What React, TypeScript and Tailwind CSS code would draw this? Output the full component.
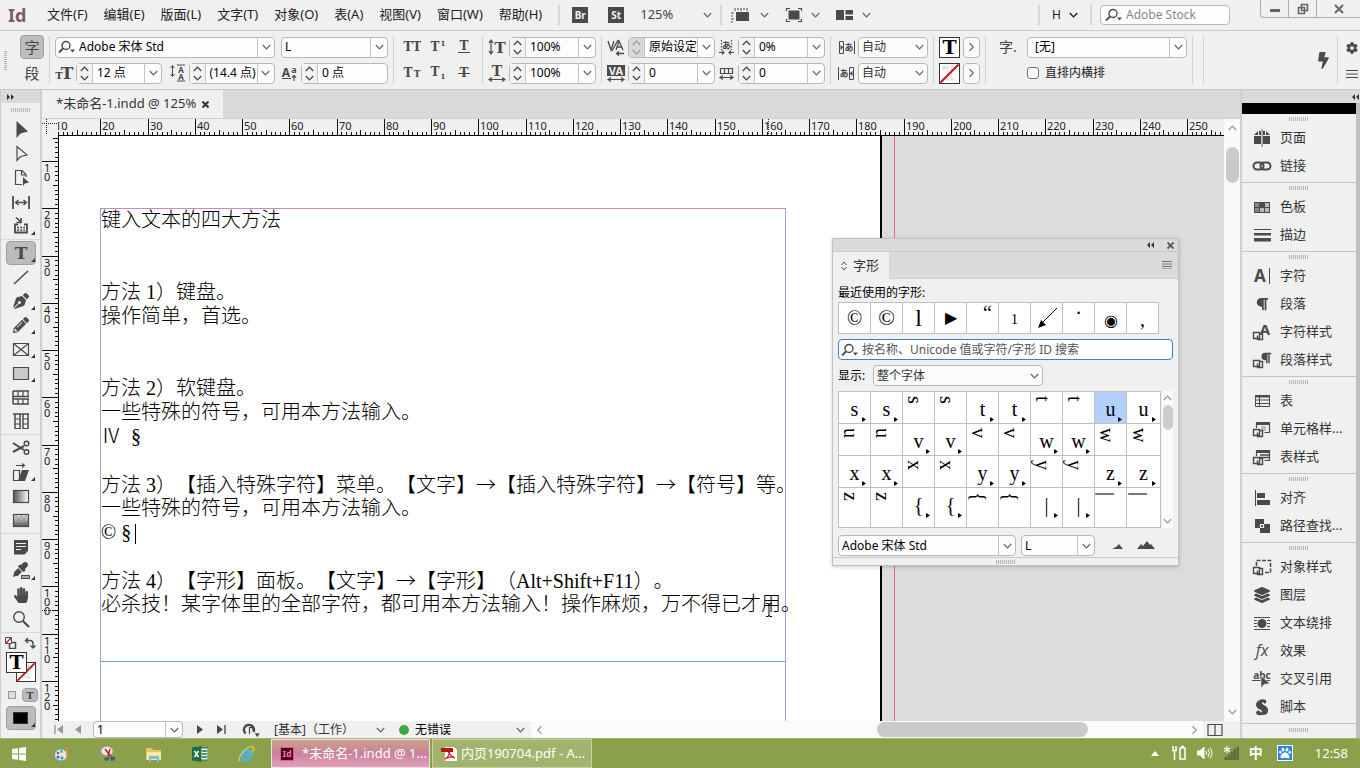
import type { ReactNode } from 'react'
import { FaBolt, FaCog, FaEyeDropper, FaHandPaper, FaLayerGroup, FaParagraph, FaPaw, FaPencilAlt, FaPenNib } from 'react-icons/fa'

const INK = '#4a4a4a'
// 10 mm on the rulers at 125%
const STEP = 47.24

function Svg({ w = 20, h = 20, children }: { w?: number; h?: number; children: ReactNode }) {
  return (
    <svg width={w} height={h} viewBox={`0 0 ${w} ${h}`} fill="none" stroke={INK} strokeWidth="1.4" className="shrink-0" aria-hidden="true">
      {children}
    </svg>
  )
}

function Letter({ x, y, size, children, fill = INK, serif = true }: { x: number; y: number; size: number; children: string; fill?: string; serif?: boolean }) {
  return (
    <text x={x} y={y} fontSize={size} fill={fill} stroke="none" fontWeight="bold" textAnchor="middle" fontFamily={serif ? 'DejaVu Serif, serif' : 'Noto Sans, sans-serif'}>
      {children}
    </text>
  )
}

function Chevron({ up = false, color = '#666' }: { up?: boolean; color?: string }) {
  return (
    <svg width="9" height="6" viewBox="0 0 9 6" fill="none" stroke={color} strokeWidth="1.2" aria-hidden="true">
      <path d={up ? 'M.8 5 4.5 1.2 8.2 5' : 'M.8 1 4.5 4.8 8.2 1'} />
    </svg>
  )
}

function Grip() {
  return (
    <svg width="20" height="4" aria-hidden="true">
      {Array.from({ length: 10 }, (_, i) => (
        <rect key={i} x={i * 2} width="1" height="4" fill="#b4b4b4" />
      ))}
    </svg>
  )
}

function SearchGlyph() {
  return (
    <Svg w={18} h={14}>
      <circle cx="8" cy="5.5" r="4" />
      <path d="M5 8.5 1 12.5" strokeWidth="1.8" />
      <path d="M12 9.5h5l-2.5 3z" fill={INK} stroke="none" />
    </Svg>
  )
}

function Combo({ label, value, className, search = false }: { label: string; value: string; className: string; search?: boolean }) {
  return (
    <div className={`flex shrink-0 items-stretch rounded-sm border border-[#b8b8b8] bg-[#fdfdfd] ${className}`}>
      {search && (
        <span className="flex items-center pl-0.5">
          <SearchGlyph />
        </span>
      )}
      <input aria-label={label} defaultValue={value} className="w-0 min-w-0 flex-1 bg-transparent px-[3px] text-black outline-none" />
      <button aria-label={`${label}列表`} className="flex w-[17px] items-center justify-center border-l border-[#c4c4c4]">
        <Chevron />
      </button>
    </div>
  )
}

function Spin({ label, value, className, drop = true, off = false }: { label: string; value: string; className: string; drop?: boolean; off?: boolean }) {
  return (
    <div className={`flex h-[21px] shrink-0 items-stretch rounded-sm border border-[#b8b8b8] bg-[#fdfdfd] ${className}`}>
      <div className={`flex w-4 flex-col items-center justify-between border-r border-[#c4c4c4] py-0.5 ${off ? 'bg-[#d8d8d8]' : 'bg-[#f3f3f3]'}`}>
        <button aria-label={`${label}增加`}><span className="block"><Chevron up color={off ? '#999' : '#444'} /></span></button>
        <button aria-label={`${label}减少`}><span className="block"><Chevron color={off ? '#999' : '#444'} /></span></button>
      </div>
      <input aria-label={label} defaultValue={value} className="w-0 min-w-0 flex-1 bg-transparent pl-1 text-black outline-none" />
      {drop && (
        <button aria-label={`${label}列表`} className="flex w-[17px] items-center justify-center border-l border-[#c4c4c4]">
          <Chevron />
        </button>
      )}
    </div>
  )
}

function Select({ label, value, className }: { label: string; value: string; className: string }) {
  return (
    <div className={`relative shrink-0 ${className}`}>
      <select aria-label={label} className="h-[21px] w-full appearance-none rounded-sm border border-[#b8b8b8] bg-[#fbfbfb] px-[3px] text-[#333] outline-none">
        <option>{value}</option>
      </select>
      <span className="pointer-events-none absolute inset-y-0 right-1 flex items-center">
        <Chevron />
      </span>
    </div>
  )
}

function Sep() {
  return <div className="mx-[5px] h-12 w-px shrink-0 bg-[#d2d2d2]" />
}

const menus = ['文件(F)', '编辑(E)', '版面(L)', '文字(T)', '对象(O)', '表(A)', '视图(V)', '窗口(W)', '帮助(H)']

function MenuBar() {
  return (
    <header className="flex h-[30px] shrink-0 items-center">
      <div className="w-[39px] pl-2 text-lg leading-none font-bold text-[#7a5a6c]">Id</div>
      <nav className="flex">
        {menus.map((m) => (
          <button key={m} className="px-2 text-[13px] whitespace-nowrap">{m}</button>
        ))}
      </nav>
      <div className="mx-2 h-5 w-0.5 bg-[#d6d6d6]" />
      <button className="ml-1 h-4 w-4 bg-[#4a4a4a] text-[10px] leading-4 font-bold text-[#f0f0f0]">Br</button>
      <button className="ml-5 h-4 w-4 bg-[#4a4a4a] text-[10px] leading-4 font-bold text-[#f0f0f0]">St</button>
      <button className="ml-4 flex w-[72px] items-center justify-between text-[13px] text-[#444]">
        125% <Chevron />
      </button>
      <div className="mx-2 h-5 w-0.5 bg-[#d6d6d6]" />
      <button aria-label="视图选项" className="flex items-center gap-2">
        <Svg w={22} h={16}>
          <path d="M5 1v3M8 1v2M11 1v3M14 1v2M17 1v3M1 6h3M1 9h2M1 12h3M1 15h2" strokeWidth="1" />
          <path d="M6 5h13v9H6z" fill={INK} stroke="none" />
        </Svg>
        <Chevron />
      </button>
      <button aria-label="屏幕模式" className="ml-4 flex items-center gap-2">
        <Svg w={18} h={16}>
          <path d="M1.500 4V1.500H5M13 1.500h3.500V4M16.500 12v2.500H13M5 14.500H1.500V12" strokeWidth="1.200" />
          <path d="M3.500 3.500h11v9h-11z" fill={INK} stroke="none" />
        </Svg>
        <Chevron />
      </button>
      <button aria-label="排列文档" className="ml-4 flex items-center gap-2">
        <Svg w={18} h={12}>
          <path d="M0 1h8v10H0zM9.500 1H17v4.500H9.500zM9.500 7H17v4H9.500z" fill={INK} stroke="none" />
        </Svg>
        <Chevron />
      </button>
      <div className="flex-1" />
      <div className="h-5 w-0.5 bg-[#d6d6d6]" />
      <button className="flex items-center gap-2 px-3">
        H <Chevron color="#111" />
      </button>
      <div className="h-5 w-0.5 bg-[#d6d6d6]" />
      <label className="ml-2 flex h-5 w-[130px] items-center rounded-sm border border-[#b8b8b8] bg-[#fdfdfd] pl-1">
        <SearchGlyph />
        <input aria-label="搜索 Adobe Stock" placeholder="Adobe Stock" className="w-0 min-w-0 flex-1 pl-[3px] outline-none placeholder:text-[#888]" />
      </label>
      <div className="ml-[30px] flex h-[18px] w-[100px] self-start rounded-bl border-b border-l border-[#aaa]">
        <button aria-label="最小化" className="flex w-7 items-center justify-center border-r border-[#aaa]">
          <span className="mt-1 h-[3px] w-2.5 bg-[#666]" />
        </button>
        <button aria-label="还原" className="flex w-7 items-center justify-center border-r border-[#aaa]">
          <Svg w={12} h={12}>
            <path d="M4.500 1.500h6v6h-6zM1.500 4.500h6v6h-6z" stroke="#666" strokeWidth="1.600" />
          </Svg>
        </button>
        <button aria-label="关闭" className="flex flex-1 items-center justify-center">
          <Svg w={10} h={10}>
            <path d="M1 1l8 8M9 1 1 9" stroke="#666" strokeWidth="2" />
          </Svg>
        </button>
      </div>
    </header>
  )
}

const caseIcons: [string, ReactNode][] = [
  ['全部大写', <><Letter x={5} y={13} size={12}>T</Letter><Letter x={14} y={13} size={12}>T</Letter></>],
  ['上标', <><Letter x={6} y={13} size={12}>T</Letter><Letter x={14} y={8} size={7}>1</Letter></>],
  ['下划线', <><Letter x={9} y={12} size={12}>T</Letter><path d="M3 14.500h12" strokeWidth="1" /></>],
  ['小型大写', <><Letter x={5} y={13} size={12}>T</Letter><Letter x={14} y={13} size={9}>T</Letter></>],
  ['下标', <><Letter x={6} y={12} size={12}>T</Letter><Letter x={14} y={15} size={7}>1</Letter></>],
  ['删除线', <><Letter x={9} y={13} size={12}>T</Letter><path d="M3 9.500h12" strokeWidth="1" /></>],
]

function ControlPanel() {
  return (
    <section className="flex h-[60px] shrink-0 items-center border-y border-[#cacaca]">
      <div className="flex w-[15px] flex-col items-end gap-px pr-2">
        {Array.from({ length: 10 }, (_, i) => <span key={i} className="h-px w-[3px] bg-[#b4b4b4]" />)}
      </div>
      <div className="ml-[5px] flex flex-col gap-0.5 text-[15px] text-[#444]">
        <button className="h-6 w-6 rounded-sm border border-[#a0a0a0] bg-[#bcbcbc] leading-5">字</button>
        <button className="h-6 w-6 leading-6">段</button>
      </div>
      <Sep />
      <div className="flex flex-col gap-[5px]">
        <div className="flex gap-1.5">
          <Combo label="字体" value="Adobe 宋体 Std" search className="h-[21px] w-[220px]" />
          <Combo label="字体样式" value="L" className="h-[21px] w-[107px]" />
        </div>
        <div className="flex items-center justify-between">
          <div className="flex items-center gap-0.5">
            <Svg w={19} h={18}><Letter x={4} y={15} size={10}>T</Letter><Letter x={12} y={15} size={17}>T</Letter></Svg>
            <Spin label="字体大小" value="12 点" className="w-[86px]" />
          </div>
          <div className="flex items-center gap-[3px]">
            <Svg w={17} h={18}>
              <path d="M3.500 2v10M1.500 4l2-2.500 2 2.500M1.500 10l2 2.500 2-2.500M8 1h8M8 17h8" strokeWidth="1" />
              <Letter x={12} y={9} size={8} serif={false}>A</Letter><Letter x={12} y={16} size={8} serif={false}>A</Letter>
            </Svg>
            <Spin label="行距" value="(14.4 点)" className="w-[86px]" />
          </div>
          <div className="flex items-center gap-[3px]">
            <Svg w={17} h={18}>
              <Letter x={5} y={13} size={12} serif={false}>A</Letter><Letter x={13} y={9} size={9} serif={false}>a</Letter>
              <path d="M1 14.500h9M13 17v-5M11 13.500l2-2 2 2" strokeWidth="1.200" />
            </Svg>
            <Spin label="基线偏移" value="0 点" drop={false} className="w-[87px]" />
          </div>
        </div>
      </div>
      <Sep />
      <div className="mx-1 grid grid-cols-3 gap-2">
        {caseIcons.map(([name, art]) => (
          <button key={name} aria-label={name}><Svg w={18} h={18}>{art}</Svg></button>
        ))}
      </div>
      <Sep />
      <div className="flex flex-col gap-[5px]">
        <div className="flex items-center gap-[3px]">
          <Svg w={18} h={18}><Letter x={12} y={15} size={15}>T</Letter><path d="M3 3v12M1 5l2-3 2 3M1 13l2 3 2-3" strokeWidth="1.200" /></Svg>
          <Spin label="垂直缩放" value="100%" className="w-[87px]" />
        </div>
        <div className="flex items-center gap-[3px]">
          <Svg w={18} h={18}><Letter x={9} y={12} size={14}>T</Letter><path d="M2 15.500h14M4 13.500l-3 2 3 2M14 13.500l3 2-3 2" strokeWidth="1.200" /></Svg>
          <Spin label="水平缩放" value="100%" className="w-[87px]" />
        </div>
      </div>
      <Sep />
      <div className="flex flex-col gap-[5px]">
        <div className="flex items-center gap-[3px]">
          <Svg w={18} h={18}>
            <path d="M1 3l3 9 3-9M5 13 11 2M9 12l3-9 4 9M10 9h5M17 15.500h-7M12 13.500l-2.500 2 2.500 2" strokeWidth="1.300" />
          </Svg>
          <Spin label="字偶间距" value="原始设定" off className="w-[87px]" />
          <Svg w={17} h={18}>
            <path d="M3.500 2v10M13.500 2v10" strokeWidth="1.200" strokeDasharray="1.500 1.500" />
            <text x="8.500" y="11" fontSize="9" fill={INK} stroke="none" fontWeight="bold" textAnchor="middle" fontFamily="Noto Sans CJK JP">あ</text>
            <path d="M1 14.500h5M4 12.500l2 2-2 2M16 14.500h-5M13 12.500l-2 2 2 2" strokeWidth="1.100" />
          </Svg>
          <Spin label="比例间距" value="0%" className="w-[87px]" />
        </div>
        <div className="flex items-center gap-[3px]">
          <Svg w={18} h={18}>
            <path d="M0 1h18v11H0z" fill={INK} stroke="none" />
            <Letter x={9} y={11} size={11} fill="#f0f0f0" serif={false}>VA</Letter>
            <path d="M1 15.500h16M4 13.500l-3 2 3 2M14 13.500l3 2-3 2" strokeWidth="1.200" />
          </Svg>
          <Spin label="字符间距" value="0" className="w-[87px]" />
          <Svg w={17} h={18}>
            <path d="M2.500 4.500h12v5h-12zM6.500 4.500v5M10.500 4.500v5M2 13.500h13M5 11.500l-3 2 3 2M12 11.500l3 2-3 2" strokeWidth="1.200" />
          </Svg>
          <Spin label="网格指定格数" value="0" className="w-[87px]" />
        </div>
      </div>
      <Sep />
      <div className="ml-0.5 flex flex-col gap-[5px]">
        <div className="flex items-center gap-[3px]">
          <Svg w={17} h={18}>
            <path d="M1.500 3.500h4v12h-4zM16.500 3v13" strokeWidth="1" /><path d="M2.500 7v5l3-2.500z" fill={INK} stroke="none" />
            <text x="11" y="13" fontSize="9" fill={INK} stroke="none" fontWeight="bold" textAnchor="middle" fontFamily="Noto Sans CJK JP">あ</text>
          </Svg>
          <Select label="字符前挤压间距" value="自动" className="w-[70px]" />
        </div>
        <div className="flex items-center gap-[3px]">
          <Svg w={17} h={18}>
            <path d="M11.500 3.500h4v12h-4zM.5 3v13" strokeWidth="1" /><path d="M14.500 7v5l-3-2.500z" fill={INK} stroke="none" />
            <text x="6" y="13" fontSize="9" fill={INK} stroke="none" fontWeight="bold" textAnchor="middle" fontFamily="Noto Sans CJK JP">あ</text>
          </Svg>
          <Select label="字符后挤压间距" value="自动" className="w-[70px]" />
        </div>
      </div>
      <Sep />
      <div className="flex flex-col gap-[5px]">
        <div className="flex gap-[3px]">
          <button aria-label="填色"><FillSwatch size={21} /></button>
          <button aria-label="填色选项" className="flex h-[21px] w-[17px] items-center justify-center rounded-sm border border-[#b8b8b8] bg-[#fbfbfb]"><span className="-rotate-90"><Chevron /></span></button>
        </div>
        <div className="flex gap-[3px]">
          <button aria-label="描边"><StrokeSwatch size={21} /></button>
          <button aria-label="描边选项" className="flex h-[21px] w-[17px] items-center justify-center rounded-sm border border-[#b8b8b8] bg-[#fbfbfb]"><span className="-rotate-90"><Chevron /></span></button>
        </div>
      </div>
      <Sep />
      <div className="ml-2 flex flex-col gap-[5px]">
        <div className="flex items-center gap-3">
          <span className="w-4 text-sm leading-5 text-[#444]">字.</span>
          <Combo label="字符样式" value="[无]" className="h-[21px] w-[160px] pl-1" />
        </div>
        <label className="ml-7 flex h-[21px] items-center gap-1.5">
          <input type="checkbox" className="h-3 w-3 appearance-none rounded-[3px] border border-[#777] bg-[#f8f8f8]" />
          直排内横排
        </label>
      </div>
      <Sep />
      <Sep />
      <div className="flex-1" />
      <button aria-label="快速应用"><FaBolt size={17} color={INK} /></button>
      <Sep />
      <div className="flex flex-col items-center gap-4 pr-[2px] pl-[3px]">
        <button aria-label="设置"><FaCog size={12} color={INK} /></button>
        <button aria-label="面板菜单"><Svg w={12} h={8}><path d="M0 .5h12M0 4h12M0 7.500h12" strokeWidth="1" /></Svg></button>
      </div>
    </section>
  )
}

function FillSwatch({ size }: { size: number }) {
  return (
    <svg width={size} height={size} viewBox="0 0 21 21" aria-hidden="true">
      <rect x=".5" y=".5" width="20" height="20" fill="#fff" stroke="#333" />
      <Letter x={10.500} y={17} size={19} fill="#000">T</Letter>
    </svg>
  )
}

function StrokeSwatch({ size }: { size: number }) {
  return (
    <svg width={size} height={size} viewBox="0 0 21 21" aria-hidden="true">
      <rect x=".5" y=".5" width="20" height="20" fill="#fff" stroke="#333" />
      <text x="10.500" y="17" fontSize="18" fill="#fff" stroke="#ccc" strokeWidth=".7" fontWeight="bold" textAnchor="middle" fontFamily="DejaVu Serif, serif">T</text>
      <path d="M1.500 19.500l18-18" stroke="#c8141c" strokeWidth="2" />
    </svg>
  )
}

type Tool = { name: string; art: ReactNode; more?: boolean; active?: boolean }

const toolGroups: Tool[][] = [
  [
    { name: '选择工具', art: <path d="M5.500 1v17l4-4.500 7.500-2z" fill={INK} stroke="none" /> },
    { name: '直接选择工具', art: <path d="M6 2.500v14l3.500-4 6.500-1.500z" strokeWidth="1.200" /> },
    { name: '页面工具', art: <><path d="M11 16.500H4.500v-14H11l4 4V9M10.500 3v4H15" strokeWidth="1.200" /><path d="M12 9v9l2-2.500 4-1z" fill={INK} stroke="none" /></> },
    { name: '间隙工具', art: <><path d="M2 4v13M18 4v13" strokeWidth="1.800" /><path d="M4.500 10.500h11M7.500 8l-3 2.500 3 2.500M12.500 8l3 2.500-3 2.500" strokeWidth="1.300" /></> },
    { name: '内容收集器工具', more: true, art: <><path d="M5 1.500l5 4.500M10 2v4.500H5.500" strokeWidth="1.600" /><path d="M7 8.500H4v8h12v-8h-3" strokeWidth="1.800" /><path d="M6 11.500h8M6 14h8" strokeWidth="1.500" strokeDasharray="2 1.200" /></> },
  ],
  [
    { name: '文字工具', active: true, more: true, art: <Letter x={10} y={16} size={17}>T</Letter> },
    { name: '直线工具', art: <path d="M3 17 17 4" strokeWidth="1.500" /> },
    { name: '钢笔工具', more: true, art: <FaPenNib x="2" y="2" size={16} color={INK} strokeWidth="0" /> },
    { name: '铅笔工具', more: true, art: <FaPencilAlt x="2" y="2" size={16} color={INK} strokeWidth="0" /> },
    { name: '矩形框架工具', more: true, art: <path d="M2.500 4.500h15v12h-15zl15 12M17.500 4.500l-15 12" strokeWidth="1.200" /> },
    { name: '矩形工具', more: true, art: <path d="M2.500 4.500h15v12h-15z" fill="#c9c9c9" strokeWidth="1.200" /> },
    { name: '水平网格工具', art: <><path d="M2 4h16M2 9.500h16M2 12h16M2 17h16M2 4v13" strokeWidth="1.500" /><path d="M7 4v5M12 4v5M17 4v5M7 12v5M12 12v5M17 12v5" strokeWidth="1.200" /></> },
    { name: '垂直网格工具', art: <><path d="M2 3h16M4 3v15M9 3v15M12 3v15M17 3v15" strokeWidth="1.500" /><path d="M4 8h5M4 13h5M4 17.500h5M12 8h5M12 13h5M12 17.500h5" strokeWidth="1.200" /></> },
  ],
  [
    { name: '剪刀工具', art: <><path d="M2 5l11 7M2 14l11-6" strokeWidth="2" /><circle cx="15.500" cy="5.500" r="2.300" /><circle cx="15.500" cy="14" r="2.300" /></> },
    { name: '自由变换工具', more: true, art: <><path d="M2.500 8.500h6v10h-6z" strokeWidth="1.200" /><path d="M11 8h7l-4 11H7z" fill={INK} stroke="none" /><path d="M5 3.500h8M11 1.500l2.500 2-2.500 2" strokeWidth="1.200" /></> },
    { name: '渐变色板工具', art: <rect x="2.500" y="4.500" width="15" height="12" fill="url(#grad-x)" strokeWidth="1.200" /> },
    { name: '渐变羽化工具', art: <><rect x="2.500" y="4.500" width="15" height="12" fill="url(#grad-y)" strokeWidth="1.200" /><path d="M4 6.500h12" stroke="#aaa" strokeWidth="2.500" strokeDasharray="2.500 2.500" /><path d="M6.500 9h10" stroke="#999" strokeWidth="2.500" strokeDasharray="2.500 2.500" /></> },
  ],
  [
    { name: '附注工具', art: <><path d="M3 3h14v11l-3.500 3.500H3z" fill={INK} stroke="none" /><path d="M5 6.500h10M5 9.500h10M5 12.500h5" stroke="#eee" strokeWidth="1.200" /></> },
    { name: '吸管工具', more: true, art: <><FaEyeDropper x="2" y="1" size={15} color={INK} strokeWidth="0" /><path d="M10.500 14.500h8v3h-8z" fill="#aaa" strokeWidth="1" /></> },
    { name: '抓手工具', art: <FaHandPaper x="2" y="2" size={16} color={INK} strokeWidth="0" /> },
    { name: '缩放显示工具', art: <><circle cx="8" cy="8" r="5.300" /><path d="M12 12l6 6" strokeWidth="2.200" /></> },
  ],
]

function Toolbar() {
  return (
    <aside className="flex w-[42px] shrink-0 flex-col items-center overflow-hidden border-x border-[#cfcfcf] border-r-2">
      <div className="flex h-[13px] w-full shrink-0 items-center bg-[#dadada] pl-1.5">
        <svg width="8" height="6" aria-hidden="true"><path d="M0 0l3 3-3 3zM4 0l3 3-3 3z" fill="#333" /></svg>
      </div>
      <div className="flex h-[14px] shrink-0 items-center"><Grip /></div>
      {toolGroups.map((group, i) => (
        <div key={i} className={`flex w-full shrink-0 flex-col items-center py-px ${i ? 'border-t border-[#d9d9d9]' : ''}`}>
          {group.map((t) => (
            <button
              key={t.name}
              aria-label={t.name}
              className={`relative flex h-6 w-[30px] items-center justify-center rounded-sm border ${t.active ? 'border-[#a0a0a0] bg-[#bcbcbc]' : 'border-transparent'}`}
            >
              <Svg>{t.art}</Svg>
              {t.more && (
                <svg width="4" height="4" className="absolute right-0 bottom-0.5" aria-hidden="true"><path d="M4 0v4H0z" fill="#333" /></svg>
              )}
            </button>
          ))}
        </div>
      ))}
      <div className="flex w-full shrink-0 flex-col items-center border-t border-[#d9d9d9] pt-1">
        <div className="flex w-full items-center justify-between px-1">
          <button aria-label="默认填色和描边">
            <Svg w={12} h={12}><path d="M4.500 5.500h6v6h-6z" strokeWidth="1.500" /><path d="M.5.500h6v6h-6z" fill="#fff" strokeWidth="1" /><path d="M1 6l5-5" stroke="#c8141c" /></Svg>
          </button>
          <button aria-label="互换填色和描边">
            <Svg w={12} h={12}><path d="M2 3.500h4q3 0 3 3v4M4 1 1.500 3.500 4 6M6.500 8.500 9 11l2.500-2.500" /></Svg>
          </button>
        </div>
        <div className="mt-[3px] grid w-[30px] grid-cols-[20px_10px] grid-rows-[20px_10px]">
          <span className="z-10 col-start-1 row-start-1"><FillSwatch size={21} /></span>
          <span className="col-span-2 col-start-1 row-span-2 row-start-1 place-self-end"><StrokeSwatch size={20} /></span>
        </div>
        <div className="mt-1.5 flex items-center gap-1.5 pl-1">
          <button aria-label="格式针对容器" className="h-2 w-2 border border-[#999] bg-[#ddd]" />
          <button aria-label="格式针对文本" className="flex h-3.5 w-4 items-center justify-center rounded-sm border border-[#a0a0a0] bg-[#bcbcbc]">
            <Svg w={12} h={12}><Letter x={6} y={10} size={10}>T</Letter></Svg>
          </button>
        </div>
        <button aria-label="应用颜色" className="relative mt-1 flex h-6 w-[30px] items-center justify-center rounded-sm border border-[#a0a0a0] bg-[#bcbcbc]">
          <span className="h-3 w-[15px] border border-[#333] bg-black" />
          <svg width="4" height="4" className="absolute right-0 bottom-0.5" aria-hidden="true"><path d="M4 0v4H0z" fill="#333" /></svg>
        </button>
      </div>
      <svg width="0" height="0" aria-hidden="true">
        <defs>
          <linearGradient id="grad-x"><stop stopColor="#555" /><stop offset="1" stopColor="#fff" /></linearGradient>
          <linearGradient id="grad-y" x2="0" y2="1"><stop stopColor="#eee" /><stop offset="1" stopColor="#555" /></linearGradient>
        </defs>
      </svg>
    </aside>
  )
}

// Offsets are the zero points of each ruler relative to its own start
function HorizontalRuler() {
  const zero = 6
  return (
    <svg width="100%" height="17" className="block shrink-0 bg-[#f0f0f0]" aria-label="水平标尺">
      {Array.from({ length: 251 }, (_, i) => i + 10).map((mm) => {
        const x = Math.round(zero - 42 + (mm * STEP) / 10)
        const top = mm % 10 === 0 ? 0 : mm % 5 === 0 ? 11 : 13
        return x > 15 && <path key={mm} d={`M${x + 0.5} ${top}v17`} stroke="#111" />
      })}
      {Array.from({ length: 25 }, (_, i) => (i + 1) * 10).map((mm) => (
        <text key={mm} x={Math.round(zero - 42 + (mm * STEP) / 10) + 2} y="11" fontSize="11" fill="#222">{mm}</text>
      ))}
      <path d="M0 0h16v17H0z" fill="#f0f0f0" />
      <path d="M0 4.500h16M4.500 0v16M726.500 0v16" stroke="#222" strokeDasharray="1 1" />
      <path d="M16 16.500h2000" stroke="#000" />
    </svg>
  )
}

function VerticalRuler() {
  const zero = -22
  return (
    <svg width="17" height="100%" className="block shrink-0 bg-[#f0f0f0]" aria-label="垂直标尺">
      {Array.from({ length: 130 }, (_, i) => i).map((mm) => {
        const y = Math.round(zero + (mm * STEP) / 10)
        const left = mm % 10 === 0 ? 0 : mm % 5 === 0 ? 11 : 13
        return <path key={mm} d={`M${left} ${y + 0.5}h17`} stroke="#111" />
      })}
      {Array.from({ length: 12 }, (_, i) => (i + 1) * 10).map((mm) => (
        <text key={mm} fontSize="11" fill="#222">
          {String(mm).split('').map((d, i) => (
            <tspan key={i} x="2" y={Math.round(zero + (mm * STEP) / 10) + 11 + i * 9}>{d}</tspan>
          ))}
        </text>
      ))}
      <path d="M0 474.500h16" stroke="#222" strokeDasharray="1 1" />
      <path d="M16.500 0v1200" stroke="#000" />
    </svg>
  )
}

const lines = [
  '键入文本的四大方法', '', '',
  '方法 1）键盘。',
  '操作简单，首选。', '', '',
  '方法 2）软键盘。',
  '一些特殊的符号，可用本方法输入。',
  'Ⅳ  §', '',
  '方法 3）【插入特殊字符】菜单。【文字】→【插入特殊字符】→【符号】等。',
  '一些特殊的符号，可用本方法输入。',
  '© §|', '',
  '方法 4）【字形】面板。【文字】→【字形】（Alt+Shift+F11）。',
  '必杀技！某字体里的全部字符，都可用本方法输入！操作麻烦，万不得已才用。',
]

function Line({ text }: { text: string }) {
  return (
    <p className="h-6 whitespace-pre">
      {text.replace('|', '').split('→').map((part, i) => (
        <span key={i}>
          {i > 0 && <span className="font-['Noto_Sans_CJK_SC',sans-serif]">→</span>}
          {part}
        </span>
      ))}
      {text.endsWith('|') && <span className="ml-1 inline-block h-5 w-px bg-black align-middle" />}
    </p>
  )
}

function Page() {
  return (
    <div className="h-full w-[823px] shrink-0 border-r-2 border-black bg-white pt-[72px] pl-[41px]">
      <div className="h-full w-[686px] border-x border-t border-x-[#a9a0dc] border-t-[#c78bc8]">
        <div className="h-[453px] border-b border-[#6f9fd0] font-['Liberation_Serif','Noto_Sans_CJK_SC',serif] text-xl leading-[22px] font-light text-black">
          {lines.map((line, i) => (
            <Line key={i} text={line} />
          ))}
        </div>
      </div>
    </div>
  )
}

// [glyph, upright]; every entry fills two cells
const pairs: [string, boolean][][] = [
  [['s', true], ['s', false], ['t', true], ['t', false], ['u', true]],
  [['u', false], ['v', true], ['v', false], ['w', true], ['w', false]],
  [['x', true], ['x', false], ['y', true], ['y', false], ['z', true]],
  [['z', false], ['{', true], ['{', false], ['|', true], ['|', false]],
]

const rows = pairs.map((row) => row.flatMap((p) => [p, p]))

const recent: [string, string][] = [
  ['©', 'items-center text-xl'],
  ['©', 'items-center text-[22px]'],
  ['l', 'items-center text-2xl'],
  ['▶', 'items-center text-base'],
  ['“', 'items-start justify-end pr-1.5 text-xl'],
  ['1', 'items-end pb-1.5 text-sm'],
  ['↙', ''],
  ['·', 'items-start text-xl'],
  ['◉', 'items-end pb-1 text-base'],
  [',', 'items-end pb-1 text-xl'],
]

function GlyphPanel() {
  return (
    <section className="absolute top-[102px] right-[45px] w-[347px] border border-[#c2c2c2] bg-[#f0f0f0] text-black shadow-[0_1px_4px_rgba(0,0,0,0.2)]">
      <div className="flex h-[13px] items-center justify-end gap-3 border-b border-[#c8c8c8] bg-[#dbdbdb] pr-1">
        <button aria-label="折叠面板"><svg width="8" height="6" className="block" aria-hidden="true"><path d="M3 0 0 3l3 3zM7 0 4 3l3 3z" fill="#333" /></svg></button>
        <button aria-label="关闭面板"><svg width="7" height="7" className="block" aria-hidden="true"><path d="M.5.500l6 6m0-6-6 6" stroke="#555" strokeWidth="1.800" /></svg></button>
      </div>
      <div className="flex h-[27px] items-stretch border-b border-[#cfcfcf] bg-[#dbdbdb]">
        <button className="-mb-px flex w-14 items-center gap-1.5 bg-[#f0f0f0] pl-2 text-[13px] text-[#333]">
          <svg width="6" height="10" fill="none" stroke="#555" aria-hidden="true"><path d="M.5 4 3 1l2.500 3M.5 6 3 9l2.500-3" /></svg>
          字形
        </button>
        <div className="flex-1" />
        <button aria-label="面板菜单" className="pr-1.5"><Svg w={10} h={8}><path d="M0 .5h10M0 3h10M0 5.500h10M0 8h10" stroke="#777" strokeWidth="1" /></Svg></button>
      </div>
      <div className="px-[5px] pt-1">
        <p className="leading-[19px]">最近使用的字形:</p>
        <div className="flex w-[321px] border-l border-[#c0c0c0] font-['Liberation_Serif',serif]">
          {recent.map(([g, pos], i) => (
            <button key={i} className={`flex h-8 w-8 justify-center overflow-hidden border-y border-r border-[#c0c0c0] bg-white leading-none ${pos}`}>
              {g === '↙' ? (
                <svg width="22" height="22" className="mt-1" aria-label="箭头"><path d="M21 1 6 16" stroke="#000" /><path d="M2 21l3-8 5 5z" /></svg>
              ) : g}
            </button>
          ))}
        </div>
        <label className="mt-[5px] flex h-[21px] items-center rounded-sm border border-[#3b7fc4] bg-white pl-0.5">
          <SearchGlyph />
          <input aria-label="搜索字形" placeholder="按名称、Unicode 值或字符/字形 ID 搜索" className="min-w-0 flex-1 pl-[3px] outline-none placeholder:text-[#555]" />
        </label>
        <div className="mt-[5px] flex items-center justify-between pr-[130px]">
          <span>显示:</span>
          <Select label="显示" value="整个字体" className="w-[170px]" />
        </div>
        <div className="mt-[5px] flex h-[137px]">
          <div className="border-t border-l border-[#c0c0c0] bg-white font-['Liberation_Serif',serif] text-xl leading-none">
            {rows.map((row, r) => (
              <div key={r} className={`flex ${r === 3 ? 'h-10' : 'h-8'}`}>
                {row.map(([g, up], c) => (
                  <button
                    key={c}
                    className={`relative flex w-8 items-start justify-center overflow-hidden border-r border-b border-[#c0c0c0] last:w-[34px] ${r === 0 && c === 8 ? 'bg-[#b3d0ff]' : ''} ${up ? 'pt-[7px]' : 'pt-1 pr-2'}`}
                  >
                    <span className={up ? '' : '[writing-mode:vertical-rl] [text-orientation:sideways]'}>{g}</span>
                    {up && (
                      <svg width="4" height="5" className="absolute top-[25px] right-1" aria-hidden="true"><path d="M0 0l4 2.500L0 5z" /></svg>
                    )}
                  </button>
                ))}
              </div>
            ))}
          </div>
          <div className="ml-px flex w-3 flex-col items-center justify-between bg-[#fafafa] py-1">
            <div className="flex flex-col items-center gap-1">
              <Chevron up color="#999" />
              <div className="h-[25px] w-2.5 rounded-full bg-[#cdcdcd]" />
            </div>
            <Chevron color="#999" />
          </div>
        </div>
        <div className="mt-[7px] flex items-center gap-[5px] pb-px">
          <Combo label="字形字体" value="Adobe 宋体 Std" className="h-[21px] w-[178px]" />
          <Combo label="字形字体样式" value="L" className="h-[21px] w-[74px]" />
          <button aria-label="缩小" className="ml-3"><Svg w={12} h={8}><path d="M0 7l4-2 3-3 4 5z" fill={INK} stroke="none" /></Svg></button>
          <button aria-label="放大" className="ml-2"><Svg w={18} h={10}><path d="M0 8l4-5 2 2 4-5 3 4 1-1 4 5z" fill={INK} stroke="none" /></Svg></button>
        </div>
      </div>
      <div className="flex h-2 items-center justify-center border-t border-[#c8c8c8]"><Grip /></div>
    </section>
  )
}

function StatusBar() {
  return (
    <footer className="flex h-[17px] shrink-0 items-center bg-[#f0f0f0]">
      <button aria-label="首页" className="ml-3"><Svg w={9} h={9}><path d="M1 0v9" stroke="#999" /><path d="M9 0v9L3 4.500z" fill="#999" stroke="none" /></Svg></button>
      <button aria-label="上一页" className="ml-3"><Svg w={6} h={9}><path d="M6 0v9L0 4.500z" fill="#999" stroke="none" /></Svg></button>
      <Combo label="页码" value="1" className="ml-3 h-[17px] w-[90px]" />
      <button aria-label="下一页" className="ml-3.5"><Svg w={6} h={9}><path d="M0 0v9l6-4.500z" fill={INK} stroke="none" /></Svg></button>
      <button aria-label="末页" className="ml-3.5"><Svg w={9} h={9}><path d="M8 0v9" /><path d="M0 0v9l6-4.500z" fill={INK} stroke="none" /></Svg></button>
      <button aria-label="打开" className="ml-4">
        <Svg w={18} h={14}><path d="M3.500 10.500A5 5 0 1 1 11.500 9" strokeWidth="2.500" /><path d="M7.500 4v7M7.500 4.500H10l1.500 3" strokeWidth="1.200" /><path d="M14 11h2.500l-1.200 2z" fill={INK} /></Svg>
      </button>
      <button className="ml-3.5 flex w-[111px] items-center justify-between whitespace-nowrap text-[#333]">[基本]（工作） <Chevron /></button>
      <span className="ml-3.5 h-2.5 w-2.5 rounded-full bg-[#3fa745]" />
      <button className="ml-1.5 flex w-[110px] items-center justify-between text-black">无错误 <Chevron /></button>
      <div className="ml-1.5 flex h-full flex-1 items-center justify-between bg-[#fbfbfb] px-1">
        <span className="rotate-90"><Chevron color="#999" /></span>
        <div className="mr-[102px] ml-auto h-[15px] w-[211px] rounded-full bg-[#cacaca]" />
        <span className="-rotate-90"><Chevron color="#999" /></span>
      </div>
      <button aria-label="拆分窗口" className="mr-4 ml-1"><Svg w={17} h={12}><path d="M1 .5h14v11H1zM8 .5v11" strokeWidth="1.200" /></Svg></button>
    </footer>
  )
}

function DocumentWindow() {
  return (
    <main className="flex min-w-0 flex-1 flex-col">
      <div className="flex h-[29px] shrink-0 border-b border-[#cfcfcf] bg-[#dadada]">
        <div className="flex w-[181px] items-center gap-1.5 bg-[#f0f0f0] pl-3.5 text-[#333]">
          <button className="text-[13px] whitespace-nowrap">*未命名-1.indd @ 125%</button>
          <button aria-label="关闭文档"><svg width="7" height="7" className="block" aria-hidden="true"><path d="M.5.500l6 6m0-6-6 6" stroke="#333" strokeWidth="2" /></svg></button>
        </div>
      </div>
      <div className="flex min-h-0 flex-1">
        <div className="flex min-w-0 flex-1 flex-col">
          <HorizontalRuler />
          <div className="flex min-h-0 flex-1">
            <VerticalRuler />
            <div className="relative flex min-w-0 flex-1 bg-[#dcdcdc]">
              <div className="flex h-full w-full overflow-hidden">
                <Page />
                <div className="ml-3 flex-1 border-l border-[#e0697c]" />
              </div>
              <svg width="8" height="14" className="absolute top-[467px] left-[706px]" fill="none" stroke="#000" aria-hidden="true">
                <path d="M1 .5h2q1 0 1 1.500v10q0 1.500-1 1.500H1M7 .5H5Q4 .5 4 2M7 13.500H5q-1 0-1-1.500" />
              </svg>
              <GlyphPanel />
            </div>
          </div>
        </div>
        <div className="flex w-4 shrink-0 flex-col items-center bg-[#fafafa] py-1.5">
          <Chevron up color="#999" />
          <div className="mt-4 h-9 w-[13px] rounded-full bg-[#cacaca]" />
          <div className="flex-1" />
          <Chevron color="#999" />
        </div>
      </div>
      <StatusBar />
    </main>
  )
}

const stylePair = <path d="M1.500 10.500h6v6h-6zM5.500 13.500v4h5v-6h-3" strokeWidth="1.400" />

const panelGroups: [string, ReactNode][][] = [
  [
    ['页面', <path d="M2 8h7v8H2zM11 8h7v8h-7zM2 7l4-4v4zM7 3h2v4H7zM11 3h2v4h-2zM14 3l4 4h-4zM9.700 1h.8v18h-.8z" fill={INK} stroke="none" />],
    ['链接', <><rect x="1.500" y="6.500" width="10" height="7" rx="3.500" strokeWidth="2" /><rect x="8.500" y="6.500" width="10" height="7" rx="3.500" strokeWidth="2" /></>],
  ],
  [
    ['色板', <><path d="M2 5h16v11H2z" fill={INK} stroke="none" /><path d="M3 6h4v4H3zM3 11h4v4H3z" fill="#888" stroke="none" /><path d="M13 6h4v4h-4zM8 11h4v4H8zM13 11h4v4h-4z" fill="#bbb" stroke="none" /></>],
    ['描边', <path d="M2 4h17v1H2zM2 8h17v2.500H2zM2 13h17v3.500H2z" fill={INK} stroke="none" />],
  ],
  [
    ['字符', <><Letter x={8} y={16} size={17} serif={false}>A</Letter><path d="M17.500 2v16" strokeWidth="1" /></>],
    ['段落', <FaParagraph x="3" y="3" size={14} color={INK} strokeWidth="0" />],
    ['字符样式', <><Letter x={13} y={13} size={15} serif={false}>A</Letter>{stylePair}</>],
    ['段落样式', <><FaParagraph x="8" y="2" size={12} color={INK} strokeWidth="0" />{stylePair}</>],
  ],
  [
    ['表', <><path d="M3.500 4.500h14v11h-14zM3.500 9h14M3.500 12.500h14M7.500 6v10" strokeWidth="1" /><path d="M3 4h15v2.500H3z" fill={INK} stroke="none" /></>],
    ['单元格样...', <><path d="M4.500 9V3.500h13v10h-5" strokeWidth="1.200" /><path d="M4 3h14v3H4z" fill={INK} stroke="none" /><path d="M9 7h5v5H9z" fill="#bbb" stroke="none" />{stylePair}</>],
    ['表样式', <><path d="M4.500 9V3.500h13v10h-5" strokeWidth="1.200" /><path d="M4 3h14v3H4z" fill={INK} stroke="none" /><path d="M8 8h9M8 10.500h9" strokeWidth="1.500" />{stylePair}</>],
  ],
  [
    ['对齐', <><path d="M3.500 2v16" strokeWidth="1" /><path d="M5 5h8v5H5zM5 12h13v5H5z" fill={INK} stroke="none" /></>],
    ['路径查找...', <><path d="M3 3h9v9H3zM8 8h10v9H8z" fill={INK} stroke="none" /><path d="M8.500 8.500h3v3h-3z" fill={INK} stroke="#eee" strokeWidth="1.200" /></>],
  ],
  [
    ['对象样式', <><path d="M4.500 9V3.500h14v12h-6" strokeWidth="1.600" strokeDasharray="4 1.500" />{stylePair}</>],
    ['图层', <FaLayerGroup x="2" y="2" size={16} color={INK} strokeWidth="0" />],
    ['文本绕排', <><path d="M2 4.500h16M2 7.500h3M15 7.500h3M2 10.500h3M15 10.500h3M2 13.500h3M15 13.500h3M2 16.500h16" strokeWidth="1" /><circle cx="10" cy="10.500" r="4.500" fill={INK} stroke="none" /></>],
    ['效果', <text x="10" y="15" fontSize="16" fontStyle="italic" fill={INK} stroke="none" textAnchor="middle" fontFamily="Open Sans, sans-serif">fx</text>],
    ['交叉引用', <><Letter x={10} y={10} size={10} serif={false}>abc</Letter><path d="M0 11.500h18" strokeWidth="1" /><path d="M9 7v12l3-3.500 6-1z" fill={INK} stroke="#f0f0f0" strokeWidth=".6" /></>],
    ['脚本', <path d="M6 4q3-3 8-1 1 2-1 4l-2-2q-2 1 0 2.500 6 2.500 5 7-1 4-6 3.500-5 1-6-2 0-2.500 3-2.500l2 2q2-.5 0-2.500-5-2-5-5 0-3 2-4z" fill={INK} stroke="none" />],
  ],
]

function Dock() {
  return (
    <aside className="flex w-[120px] shrink-0 flex-col overflow-hidden border-l-2 border-[#cfcfcf] bg-[#f0f0f0]">
      <div className="flex h-[13px] shrink-0 items-center justify-end bg-[#dadada]">
        <svg width="8" height="6" aria-hidden="true"><path d="M3 0 0 3l3 3zM7 0 4 3l3 3z" fill="#333" /></svg>
      </div>
      <div className="flex min-h-0 flex-1 border-r-4 border-[#c0c0c0]">
        <div className="min-w-0 flex-1 overflow-hidden">
          <div className="h-[11px] bg-black" />
          {panelGroups.map((group, i) => (
            <div key={i} className={`pb-0.5 ${i ? 'border-t border-[#c4c4c4]' : ''}`}>
              <div className="flex h-2.5 items-center justify-center"><Grip /></div>
              {group.map(([name, art]) => (
                <button key={name} className="flex h-7 w-full items-center gap-2 pl-2.5 text-[13px] whitespace-nowrap text-[#333]">
                  <Svg>{art}</Svg>
                  {name}
                </button>
              ))}
            </div>
          ))}
          <div className="flex h-3 items-center justify-center border-t border-[#c4c4c4]"><Grip /></div>
        </div>
      </div>
    </aside>
  )
}

function Taskbar() {
  return (
    <footer className="flex h-[30px] shrink-0 items-center border-t border-[#a3b564] bg-[#8ba04a] text-white">
      <button aria-label="开始" className="ml-3"><svg width="14" height="14" className="block" aria-hidden="true"><path d="M0 2l6-.8v5.300H0zM7 1l7-1v6.500H7zM0 7.500h6v5.300L0 12zM7 7.500h7V14l-7-1z" fill="#fff" /></svg></button>
      <div className="ml-7 flex gap-[30px]">
        <button aria-label="画图">
          <svg width="16" height="16" className="block" aria-hidden="true">
            <ellipse cx="7" cy="9" rx="6.500" ry="6" fill="#d8e8f2" stroke="#6d9ab8" />
            <circle cx="4" cy="7" r="1.300" fill="#d33" /><circle cx="7.500" cy="5.500" r="1.300" fill="#4a4" /><circle cx="4" cy="11" r="1.500" fill="#27c" /><circle cx="8" cy="12" r="1.500" fill="#6b8e3c" /><path d="M12 1h2v6l-1 8-1-8z" fill="#e08a2c" />
          </svg>
        </button>
        <button aria-label="截图工具">
          <svg width="16" height="16" className="block" aria-hidden="true">
            <ellipse cx="7" cy="5" rx="6" ry="4.500" fill="#f3eeee" stroke="#c99" /><path d="M5 3l6 8M10 3 8 10" stroke="#b22" strokeWidth="1.500" /><path d="M10 10l5 1v3l-4 1zM9 11l-5 1 1 3 4-1z" fill="#3c6480" />
          </svg>
        </button>
        <button aria-label="文件资源管理器">
          <svg width="16" height="16" className="block" aria-hidden="true">
            <path d="M0 2h6l1 2h8v10H0z" fill="#e8c75a" /><path d="M1 6h14v8H1z" fill="#f7e7a4" /><path d="M3 10h10v6h-2v-3H5v3H3z" fill="#7fb9df" />
          </svg>
        </button>
        <button aria-label="Excel">
          <svg width="16" height="16" className="block" aria-hidden="true">
            <path d="M8 2h8v12H8z" fill="#fff" stroke="#1e7145" /><path d="M10 5h5M10 8h5M10 11h5" stroke="#1e7145" strokeWidth="1.500" /><path d="M0 1.500 9.500 0v16L0 14.500z" fill="#1e7145" /><path d="M2.500 5l4 6m0-6-4 6" stroke="#fff" strokeWidth="1.500" />
          </svg>
        </button>
        <button aria-label="Internet Explorer">
          <svg width="17" height="16" className="block" fill="none" aria-hidden="true">
            <path d="M13 11.500A5 5 0 1 1 13.500 8.500H5" stroke="#4db2ea" strokeWidth="2.800" /><path d="M2 15Q-1 12 6 5t10-3q0 2-2 4" stroke="#e8c94f" strokeWidth="1.200" />
          </svg>
        </button>
      </div>
      <button className="ml-4 flex h-[29px] w-[159px] items-center gap-2 border border-white/70 bg-linear-to-b from-[#c9a08c] via-[#c9829a] to-[#e2a0be] pl-2 text-[13px] whitespace-nowrap">
        <span className="h-3.5 w-3.5 border border-[#ff4f9a] bg-[#3a0a20] text-[9px] leading-3 font-bold text-[#ff6fae]">Id</span>
        *未命名-1.indd @ 1...
      </button>
      <button className="ml-0.5 flex h-[29px] w-[160px] items-center gap-1 border border-white/40 bg-white/20 pl-2 text-[13px] whitespace-nowrap">
        <svg width="16" height="16" className="shrink-0" fill="none" aria-hidden="true">
          <path d="M4 1h9l3 3v11H4z" fill="#fff" /><path d="M0 2h12v4H0z" fill="#b7141a" /><path d="M4 13c4-2 5-7 4-8s-1 4 6 7c-3-2-7-1-10 1z" stroke="#c8141c" strokeWidth="1.200" />
        </svg>
        内页190704.pdf - A...
      </button>
      <div className="flex-1" />
      <div className="flex items-center gap-2.5 pr-3">
        <button aria-label="显示隐藏的图标" className="mr-0.5"><svg width="8" height="5" className="block" aria-hidden="true"><path d="M4 0l4 5H0z" fill="#fff" /></svg></button>
        <svg width="16" height="16" fill="none" stroke="#fff" strokeWidth="1.500" aria-label="电源"><path d="M9 3h5v11H9zM10 1.500h3M2 1v4M5 1v4M1 5.500h5M3.500 6v9" /></svg>
        <svg width="16" height="14" fill="none" stroke="#fff" aria-label="音量"><path d="M0 5h3l4-4v12L3 9H0z" fill="#fff" /><path d="M9 5q1.500 2 0 4M11 3q3 4 0 8M13 1.500q4 5.500 0 11" /></svg>
        <svg width="16" height="14" aria-label="网络"><path d="M2 11h2v3H2zM5 9h2v5H5zM8 6h2v8H8zM11 3h2v11h-2zM14 1h2v13h-2z" fill="#6c7449" stroke="#4c5430" strokeWidth=".5" /><path d="M4 0v7M1 2l6 3.500M7 2 1 5.500" stroke="#fff" strokeWidth="1.200" /></svg>
        <button className="text-sm leading-none font-bold">中</button>
        <button aria-label="输入法" className="ml-1 flex h-4 w-4 items-center justify-center border border-white bg-[#2f86d8]"><FaPaw size={12} /></button>
        <time className="ml-3 text-[13px]">12:58</time>
      </div>
    </footer>
  )
}

export default function App() {
  return (
    <div className="flex h-screen flex-col overflow-hidden bg-[#f0f0f0] font-['Noto_Sans','Noto_Sans_CJK_SC',sans-serif] text-xs text-[#222] [text-spacing-trim:space-all]">
      <MenuBar />
      <ControlPanel />
      <div className="flex min-h-0 flex-1">
        <Toolbar />
        <DocumentWindow />
        <Dock />
      </div>
      <Taskbar />
    </div>
  )
}
